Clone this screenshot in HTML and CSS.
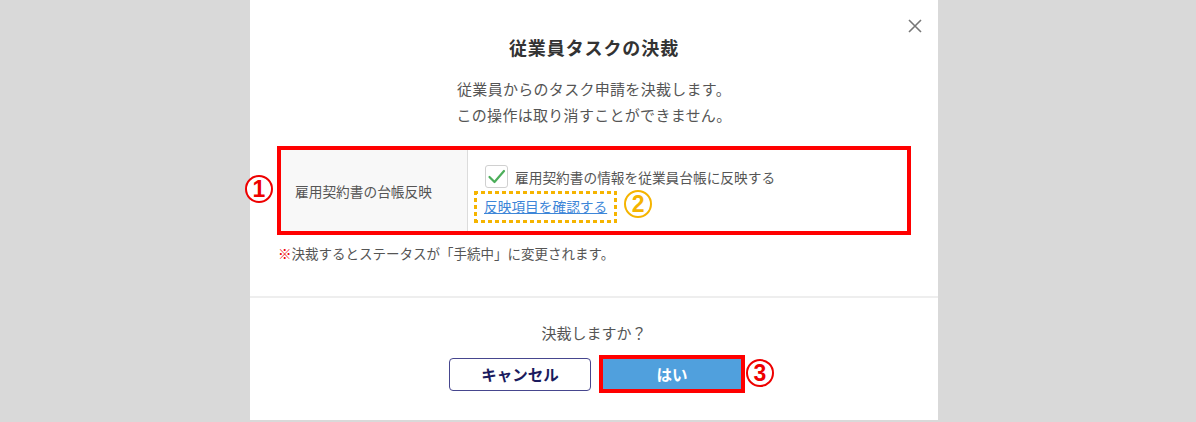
FILE: index.html
```html
<!DOCTYPE html>
<html lang="ja">
<head>
<meta charset="utf-8">
<title>従業員タスクの決裁</title>
<link rel="stylesheet" href="styles.css">
</head>
<body>
<div class="modal">
  <button class="close" aria-label="閉じる">
    <svg width="14" height="14" viewBox="0 0 14 14"><path d="M1 1 L13 13 M13 1 L1 13" stroke="#777" stroke-width="1.6" fill="none"/></svg>
  </button>
  <div class="modal-body">
    <h1 class="title">従業員タスクの決裁</h1>
    <p class="desc">従業員からのタスク申請を決裁します。<br>この操作は取り消すことができません。</p>
    <div class="highlight">
      <span class="badge badge-red badge-one">1</span>
      <div class="row">
        <div class="label">雇用契約書の台帳反映</div>
        <div class="value">
          <label class="check-line">
            <span class="checkbox">
              <svg width="21" height="21" viewBox="0 0 21 21"><path d="M3.5 11 L8.5 16 L18 5" stroke="#4cae5a" stroke-width="2.2" fill="none" stroke-linecap="round" stroke-linejoin="round"/></svg>
            </span>
            <span>雇用契約書の情報を従業員台帳に反映する</span>
          </label>
          <div class="link-line">
            <a class="link" href="#">反映項目を確認する</a>
            <span class="badge badge-yellow">2</span>
          </div>
        </div>
      </div>
    </div>
    <p class="note"><span class="mark">※</span>決裁するとステータスが「手続中」に変更されます。</p>
  </div>
  <div class="modal-footer">
    <p class="question">決裁しますか？</p>
    <div class="buttons">
      <button class="btn btn-cancel">キャンセル</button>
      <div class="yes-wrap">
        <button class="btn btn-yes">はい</button>
        <span class="badge badge-red badge-three">3</span>
      </div>
    </div>
  </div>
</div>
</body>
</html>
```

FILE: styles.css
```css
* { box-sizing: border-box; }
html, body { margin: 0; padding: 0; }
body {
  background: #d9d9d9;
  font-family: "Noto Sans CJK JP", "Noto Sans", sans-serif;
  color: #555;
  height: 422px;
  overflow: hidden;
}
.modal {
  position: relative;
  width: 688px;
  height: 420px;
  margin-left: 250px;
  background: #fff;
}
.close {
  position: absolute;
  top: 19px;
  left: 658px;
  width: 14px;
  height: 14px;
  padding: 0;
  border: 0;
  background: none;
  display: block;
}
.close svg { display: block; }
.modal-body {
  height: 296px;
  padding-top: 34px;
}
.title {
  margin: 0;
  font-size: 18px;
  letter-spacing: 0.9px;
  line-height: 26px;
  font-weight: 700;
  color: #333;
  text-align: center;
}
.desc {
  margin: 16px 0 0;
  font-size: 15px;
  letter-spacing: 0.3px;
  line-height: 26px;
  text-align: center;
  color: #555;
}
.highlight {
  position: relative;
  margin: 18px 27px 0;
  border: 4px solid #ff0000;
}
.row {
  display: flex;
  height: 81px;
}
.label {
  width: 187px;
  background: #f8f8f8;
  border-right: 1px solid #dcdcdc;
  display: flex;
  align-items: center;
  padding-left: 14px;
  font-size: 13.7px;
  color: #555;
}
.value {
  flex: 1;
  padding: 15px 0 0 17px;
  font-size: 13.7px;
  color: #555;
}
.check-line {
  display: flex;
  align-items: center;
  gap: 7px;
  height: 23px;
}
.checkbox {
  width: 23px;
  height: 23px;
  border: 1px solid #d0d0d0;
  border-radius: 3px;
  background: #fff;
  display: flex;
  align-items: center;
  justify-content: center;
}
.checkbox svg { display: block; }
.link-line {
  display: flex;
  align-items: center;
  margin-top: 6px;
  height: 24px;
}
.link {
  position: relative;
  color: #3d86d8;
  text-decoration: underline;
  line-height: 20px;
  margin-left: -1px;
}
.link::after {
  content: "";
  position: absolute;
  left: -10px;
  right: -10px;
  top: -5px;
  bottom: -7px;
  background:
    repeating-linear-gradient(90deg, #f5b400 0 4px, transparent 4px 7px) top left / 100% 3px no-repeat,
    repeating-linear-gradient(90deg, #f5b400 0 4px, transparent 4px 7px) bottom left / 100% 3px no-repeat,
    repeating-linear-gradient(180deg, #f5b400 0 4px, transparent 4px 7px) top left / 3px 100% no-repeat,
    repeating-linear-gradient(180deg, #f5b400 0 4px, transparent 4px 7px) top right / 3px 100% no-repeat;
}
.badge {
  display: flex;
  align-items: center;
  justify-content: center;
  width: 28px;
  height: 28px;
  border-radius: 50%;
  border: 2px solid currentColor;
  font-family: "Liberation Sans", Arial, sans-serif;
  font-weight: 700;
  font-size: 23px;
  line-height: 1;
  background: #fff;
}
.badge-yellow {
  color: #f5b400;
  margin-left: 17px;
  margin-top: -4px;
}
.badge-red { color: #ee0000; }
.badge-one {
  position: absolute;
  left: -36px;
  top: 25px;
}
.note {
  margin: 8px 0 0 28px;
  font-size: 13.5px;
  line-height: 20px;
  color: #555;
}
.mark { color: #ee0000; }
.modal-footer {
  border-top: 2px solid #eeeeee;
  padding-top: 24px;
  text-align: center;
}
.question {
  margin: 0;
  font-size: 15px;
  line-height: 22px;
  color: #555;
}
.buttons {
  display: flex;
  justify-content: center;
  align-items: center;
  gap: 8px;
  margin-top: 11px;
  padding-left: 6px;
}
.btn {
  font-family: "Noto Sans CJK JP", sans-serif;
  font-weight: 700;
  font-size: 15.5px;
  cursor: pointer;
}
.btn-cancel {
  width: 142px;
  height: 33px;
  background: #fff;
  border: 1px solid #46468e;
  border-radius: 4px;
  color: #1b1b5e;
}
.yes-wrap {
  position: relative;
}
.btn-yes {
  display: block;
  width: 146px;
  height: 38px;
  background: #50a0dd;
  border: 4px solid #ff0000;
  color: #fff;
  padding: 0;
}
.badge-three {
  position: absolute;
  left: 147px;
  top: 4px;
}
```
